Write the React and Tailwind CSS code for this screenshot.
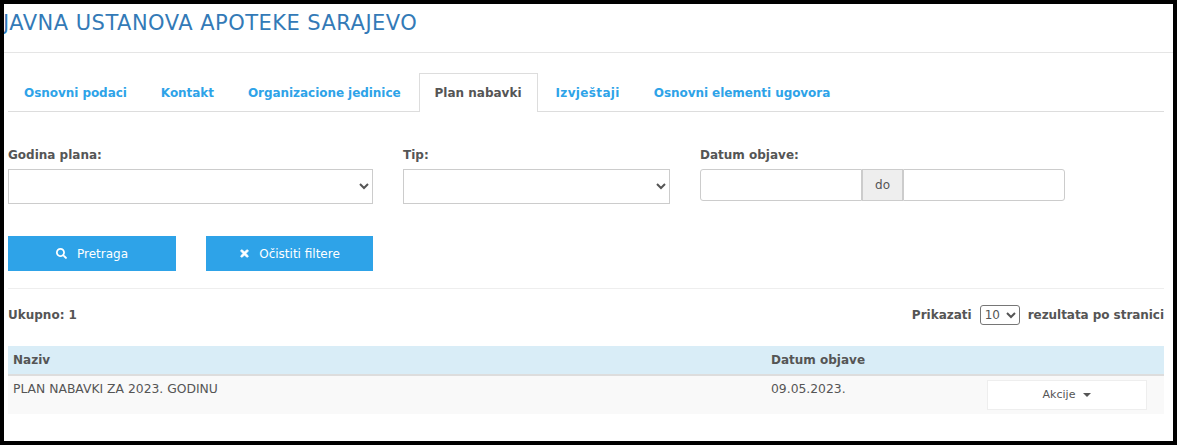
import React from 'react';
import { FaSearch, FaTimes } from 'react-icons/fa';

const tabs = ['Osnovni podaci', 'Kontakt', 'Organizacione jedinice', 'Plan nabavki', 'Izvještaji', 'Osnovni elementi ugovora'];

const Label = ({ children }) => (
  <label className="block h-[27px] pt-[4px] text-[12px] leading-[18px] font-bold text-[#555555]">{children}</label>
);

const App = () => {
  return (
    <div className="h-[445px] overflow-hidden border-4 border-black bg-white font-['DejaVu_Sans',sans-serif] text-[#555555]">
      {/* NASLOV */}
      <div className="h-[49px] overflow-hidden border-b border-[#e5e5e5]">
        <h1 className="-ml-px pt-[6px] text-[21px] leading-[26px] font-normal tracking-[0.47px] text-[#337ab7]">JAVNA USTANOVA APOTEKE SARAJEVO</h1>
      </div>

      <div className="pl-[4px] pr-[9px]">
        {/* TABOVI */}
        <div className="mt-[20px] flex h-[39px] gap-[2px] border-b border-[#dddddd]">
          {tabs.map(tab => tab === 'Plan nabavki' ? (
            <div key={tab} className="h-[39px] border border-b-0 border-[#dddddd] bg-white px-[15px] pt-[10px] text-[12px] leading-[18px] font-bold text-[#555555]">{tab}</div>
          ) : (
            <div key={tab} className={`h-[38px] border border-transparent px-[15px] pt-[10px] text-[12px] leading-[18px] font-bold text-[#2ea3e8] ${tab === 'Izvještaji' ? 'tracking-[0.35px]' : tab === 'Osnovni elementi ugovora' ? 'tracking-[-0.06px]' : 'tracking-[-0.05px]'}`}>{tab}</div>
          ))}
        </div>

        {/* FILTERI */}
        <div className="mt-[30px] flex gap-[30px]">
          <div className="w-[365px]">
            <Label>Godina plana:</Label>
            <select className="h-[35px] w-full border border-[#cccccc] bg-white"></select>
          </div>
          <div className="w-[267px]">
            <Label>Tip:</Label>
            <select className="h-[35px] w-full border border-[#cccccc] bg-white"></select>
          </div>
          <div className="w-[365px]">
            <Label>Datum objave:</Label>
            <div className="flex h-[32px]">
              <input className="w-[162px] rounded-l-[3px] border border-[#cccccc]" />
              <div className="flex w-[41px] items-center justify-center border border-[#cccccc] bg-[#eeeeee] text-[12px] text-[#555555]">do</div>
              <input className="min-w-0 flex-1 rounded-r-[3px] border border-[#cccccc]" />
            </div>
          </div>
        </div>

        {/* DUGMAD */}
        <div className="mt-[32px] flex gap-[30px]">
          <button className="flex h-[35px] w-[168px] items-center justify-center gap-[10px] bg-[#2ea3e8] text-[12px] text-white">
            <FaSearch className="text-[11px]" /> Pretraga
          </button>
          <button className="flex h-[35px] w-[167px] items-center justify-center gap-[9px] bg-[#2ea3e8] text-[12px] text-white">
            <FaTimes className="text-[11px]" stroke="currentColor" strokeWidth={40} /> Očistiti filtere
          </button>
        </div>

        <div className="mt-[17px] h-px bg-[#eeeeee]"></div>

        {/* UKUPNO */}
        <div className="mt-[15px] flex h-[21px] items-center justify-between text-[12px] font-bold text-[#555555]">
          <span>Ukupno: 1</span>
          <div className="flex items-center">
            <span>Prikazati</span>
            <select className="mx-[8px] h-[20px] w-[40px] rounded-[3px] border border-[#767676] bg-white text-[12px] font-normal text-[#555555]">
              <option>10</option>
            </select>
            <span className="tracking-[-0.05px]">rezultata po stranici</span>
          </div>
        </div>

        {/* TABELA */}
        <table className="mt-[21px] w-full table-fixed text-[12.35px] text-[#555555]">
          <thead>
            <tr className="h-[29px] border-b-2 border-[#dddddd] bg-[#d9edf7] text-left text-[12px]">
              <th className="w-[763px] pl-[5px] font-bold">Naziv</th>
              <th className="font-bold">Datum objave</th>
            </tr>
          </thead>
          <tbody>
            <tr className="h-[39px] bg-[#f9f9f9] align-top">
              <td className="pt-[4px] pl-[5px] leading-[18px]">PLAN NABAVKI ZA 2023. GODINU</td>
              <td className="leading-[18px]">
                <div className="flex">
                  <span className="w-[216px] pt-[4px]">09.05.2023.</span>
                  <button className="mt-[4px] flex h-[30px] w-[160px] items-center justify-center gap-[8px] border border-[#eeeeee] bg-white text-[11px] text-[#555555]">
                    Akcije <span className="h-0 w-0 border-x-4 border-t-4 border-x-transparent border-t-[#555555]"></span>
                  </button>
                </div>
              </td>
            </tr>
          </tbody>
        </table>
      </div>
    </div>
  );
};

export default App;
